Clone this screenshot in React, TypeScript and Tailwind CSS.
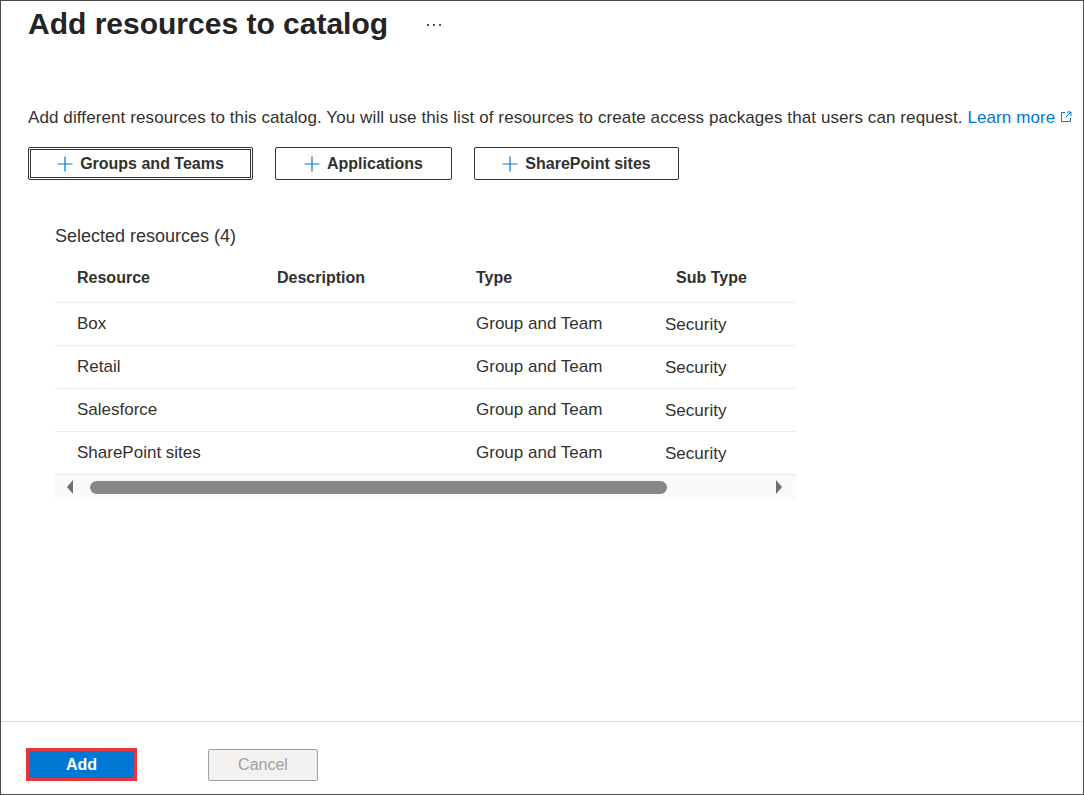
import React from "react";

const rows = ["Box", "Retail", "Salesforce", "SharePoint sites"];

function Plus() {
  return (
    <svg width="16" height="16" viewBox="0 0 16 16" className="shrink-0">
      <path d="M8 0.5V15.5M0.5 8H15.5" stroke="#0078d4" strokeWidth="1.2" fill="none" />
    </svg>
  );
}

export default function App() {
  return (
    <div
      className="w-[1084px] h-[795px] border border-[#4b4b4b] bg-white flex flex-col text-[#323130]"
      style={{ fontFamily: '"Segoe UI", "Liberation Sans", Arial, sans-serif' }}
    >
      <div className="flex-1 flex flex-col">
        <div className="flex items-center pl-[27px] pt-[1px] h-[44px]">
          <h1 className="text-[30px] font-semibold leading-[36px] text-[#252423]">Add resources to catalog</h1>
          <span className="ml-[39px] mt-[2px] flex gap-[4px]">
            <span className="w-[2px] h-[2px] bg-[#555]" />
            <span className="w-[2px] h-[2px] bg-[#555]" />
            <span className="w-[2px] h-[2px] bg-[#555]" />
          </span>
        </div>

        <p className="mt-[61px] pl-[27px] text-[17px] tracking-[0.1px] leading-[24px] text-[#323130] whitespace-nowrap">
          Add different resources to this catalog. You will use this list of resources to create access packages that users can request.{" "}
          <span className="text-[#0078d4]">Learn more</span>
          <svg width="12" height="12" viewBox="0 0 12 12" className="inline-block ml-[5px] -mt-[4px]">
            <path d="M5 1.5H1.5V10.5H10.5V7M7 1H11V5M11 1L5.5 6.5" stroke="#0078d4" strokeWidth="1" fill="none" />
          </svg>
        </p>

        <div className="mt-[17px] pl-[27px] flex gap-[22px]">
          <button className="h-[33px] w-[225px] border border-[#323130] rounded-[2px] p-[1px]">
            <div className="h-full w-full border border-[#323130] flex items-center justify-center gap-[7px] text-[16px] font-semibold text-[#323130]">
              <Plus />
              <span>Groups and Teams</span>
            </div>
          </button>
          <button className="h-[33px] w-[177px] border border-[#323130] rounded-[2px] flex items-center justify-center gap-[7px] text-[16px] font-semibold text-[#323130]">
            <Plus />
            <span>Applications</span>
          </button>
          <button className="h-[33px] w-[205px] border border-[#323130] rounded-[2px] flex items-center justify-center gap-[7px] text-[16px] font-semibold text-[#323130]">
            <Plus />
            <span>SharePoint sites</span>
          </button>
        </div>

        <div className="mt-[44px] pl-[54px] text-[18px] leading-[24px] text-[#323130]">Selected resources (4)</div>

        <div className="ml-[54px] w-[741px] mt-[6px]">
          <div className="flex h-[49px] items-center border-b border-[#edebe9] text-[16px] font-semibold text-[#323130]">
            <div className="w-[200px] pl-[22px]">Resource</div>
            <div className="w-[200px] pl-[22px]">Description</div>
            <div className="w-[200px] pl-[21px]">Type</div>
            <div className="flex-1 pl-[21px]">Sub Type</div>
          </div>
          {rows.map((r) => (
            <div key={r} className="flex h-[43px] items-center border-b border-[#edebe9] text-[17px] text-[#323130]">
              <div className="w-[200px] pl-[22px]">{r}</div>
              <div className="w-[200px] pl-[22px]"></div>
              <div className="w-[200px] pl-[21px]">Group and Team</div>
              <div className="flex-1 pl-[10px] pt-[2px]">Security</div>
            </div>
          ))}
          <div className="h-[24px] bg-[#fafafa] relative">
            <svg width="8" height="16" viewBox="0 0 8 16" className="absolute left-[11px] top-[4px]">
              <path d="M7 1L1 8L7 15Z" fill="#707070" />
            </svg>
            <div className="absolute left-[35px] top-[6px] w-[577px] h-[13px] rounded-[7px] bg-[#878787]" />
            <svg width="8" height="16" viewBox="0 0 8 16" className="absolute left-[720px] top-[4px]">
              <path d="M1 1L7 8L1 15Z" fill="#707070" />
            </svg>
          </div>
        </div>
      </div>

      <div className="h-[73px] border-t border-[#dcdcdc] flex items-start pt-[26px] pl-[25px]">
        <button className="w-[111px] h-[33px] bg-[#0078d4] border-[3px] border-[#e8363e] text-white font-semibold text-[16px] flex items-center justify-center">
          Add
        </button>
        <button className="ml-[71px] mt-[1px] w-[110px] h-[32px] bg-[#f3f2f1] border border-[#a19f9d] rounded-[2px] text-[#a19f9d] text-[16px] flex items-center justify-center">
          Cancel
        </button>
      </div>
    </div>
  );
}
